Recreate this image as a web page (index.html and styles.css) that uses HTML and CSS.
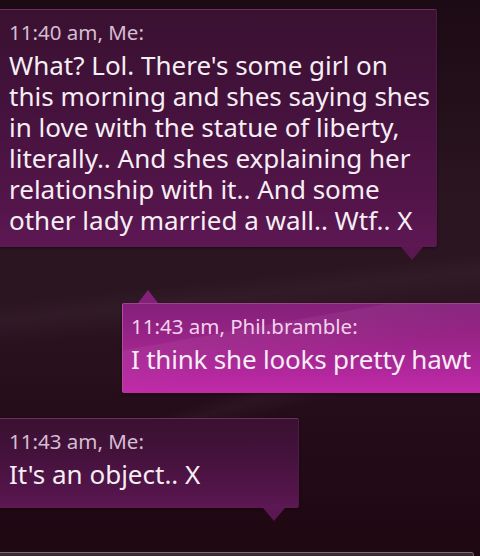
FILE: index.html
```html
<!DOCTYPE html>
<html>
<head>
<meta charset="utf-8">
<link rel="stylesheet" href="styles.css">
</head>
<body>
<div class="screen">
  <div class="list">
    <div class="bubble out first">
      <div class="meta">11:40 am, Me:</div>
      <div class="text">What? Lol. There's some girl on<br>this morning and shes saying shes<br>in love with the statue of liberty,<br>literally.. And shes explaining her<br>relationship with it.. And some<br>other lady married a wall.. Wtf.. X</div>
    </div>
    <div class="bubble in">
      <div class="meta">11:43 am, Phil.bramble:</div>
      <div class="text">I think she looks pretty hawt</div>
    </div>
    <div class="bubble out short">
      <div class="meta">11:43 am, Me:</div>
      <div class="text">It's an object.. X</div>
    </div>
  </div>
  <div class="composer"></div>
</div>
</body>
</html>
```
FILE: styles.css
```css
html, body {
  margin: 0;
  padding: 0;
  width: 480px;
  height: 556px;
  overflow: hidden;
  background: #1f0b16;
}
.screen {
  position: relative;
  width: 480px;
  height: 556px;
  display: flex;
  flex-direction: column;
  font-family: "Noto Sans", "Open Sans", sans-serif;
  background:
    linear-gradient(163deg, rgba(255,255,255,0) 66%, rgba(255,220,240,0.035) 68%, rgba(255,255,255,0) 71%),
    linear-gradient(174deg, rgba(255,255,255,0) 50%, rgba(255,220,240,0.03) 53%, rgba(255,255,255,0) 57%),
    linear-gradient(180deg, #1c0a14 0%, #2a1520 35%, #2b1521 55%, #250c19 75%, #1f0712 100%);
}
.list {
  display: flex;
  flex-direction: column;
  padding-top: 9px;
}
.bubble {
  position: relative;
  box-sizing: border-box;
  padding: 9px 9px 18px 9px;
  box-shadow: 0 1px 3px rgba(0,0,0,0.45);
}
.bubble.out {
  align-self: flex-start;
  background: linear-gradient(180deg, #3a1131 0%, #44123c 40%, #55154b 85%, #5e1854 100%);
  border-top: 1px solid #6e2f63;
  border-right: 1px solid #4f1a47;
  border-radius: 0 2px 2px 0;
}
.bubble.first {
  width: 437px;
  padding-bottom: 11px;
}
.bubble.short {
  width: 299px;
  margin-top: 25px;
}
.bubble.in {
  align-self: flex-end;
  width: 358px;
  padding-left: 8px;
  padding-right: 4px;
  margin-top: 56px;
  background:
    linear-gradient(170deg, rgba(255,255,255,0) 30%, rgba(255,255,255,0.05) 31%, rgba(255,255,255,0) 60%),
    linear-gradient(180deg, #84207a 0%, #9a2488 40%, #b0279c 75%, #c22aa9 100%);
  border-top: 1px solid #a0418f;
  border-left: 1px solid #b54aa3;
  border-radius: 2px 0 0 2px;
}
.bubble.out::after {
  content: "";
  position: absolute;
  right: 13px;
  bottom: -13px;
  width: 0;
  height: 0;
  border-left: 11px solid transparent;
  border-right: 11px solid transparent;
  border-top: 13px solid #5b1751;
}
.bubble.in::before {
  content: "";
  position: absolute;
  left: 15px;
  top: -14px;
  width: 0;
  height: 0;
  border-left: 10px solid transparent;
  border-right: 10px solid transparent;
  border-bottom: 13px solid #84207a;
}
.meta {
  font-size: 20.5px;
  line-height: 26px;
  color: #d6bdd1;
  margin-bottom: 5px;
  white-space: nowrap;
}
.bubble.in .meta {
  color: #f3d2ec;
}
.text {
  font-size: 26px;
  line-height: 31px;
  color: #f6eef4;
  white-space: nowrap;
}
.bubble.in .text {
  letter-spacing: -0.2px;
}
.composer {
  margin-top: auto;
  height: 4px;
  width: 474px;
  box-sizing: border-box;
  border-top: 1px solid #7d6c78;
  border-right: 1px solid #6a5a66;
  border-radius: 0 3px 0 0;
  background: #3a2a36;
}
```
